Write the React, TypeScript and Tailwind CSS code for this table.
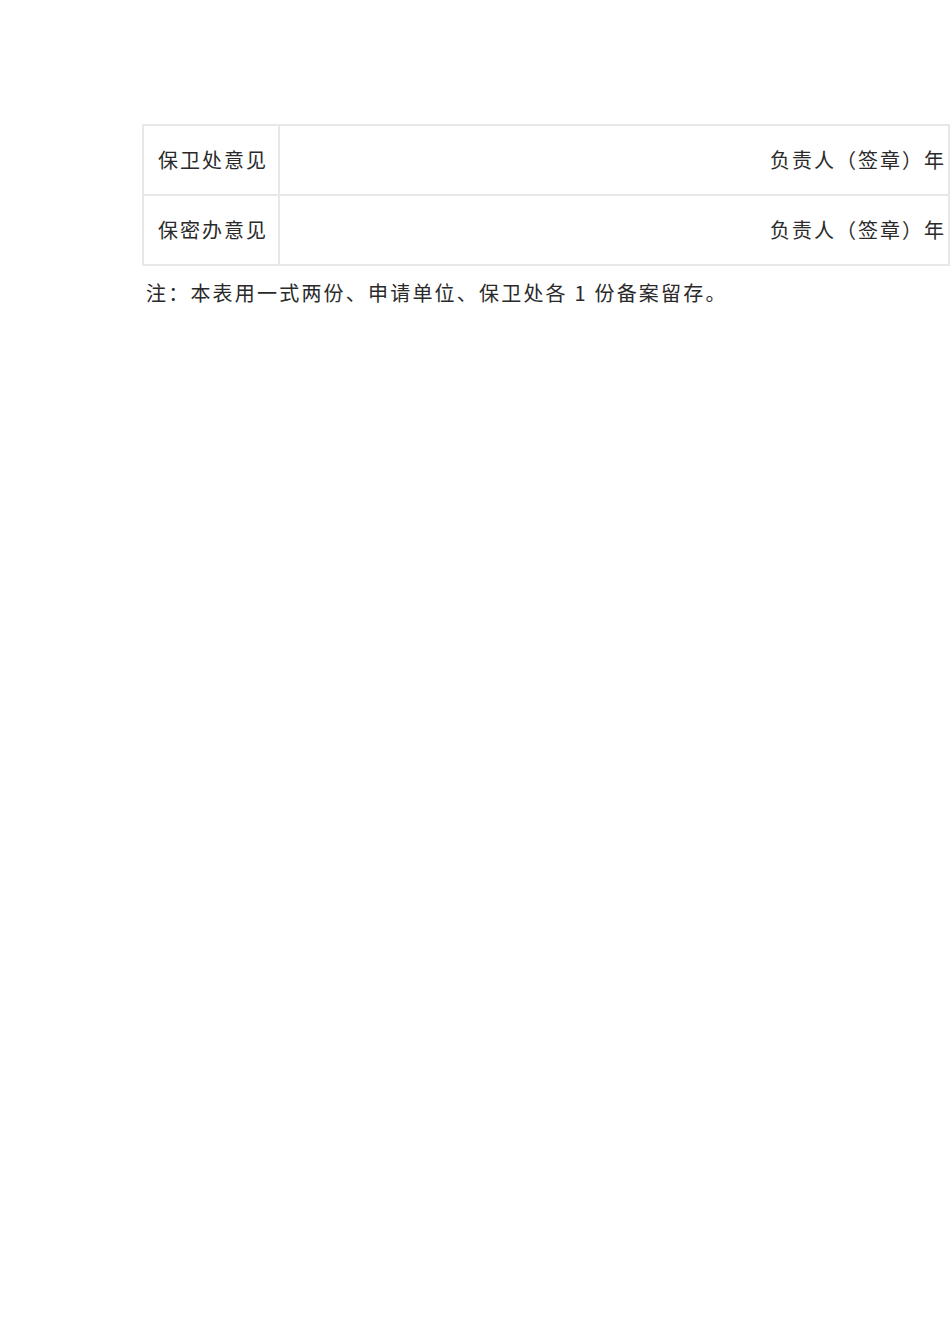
import React from "react";

const rows = ["保卫处意见", "保密办意见"];

export default function App() {
  return (
    <div
      className="w-[950px] h-[1344px] bg-white overflow-hidden text-[#2a2a2a]"
      style={{ fontFamily: '"Noto Sans CJK SC", "Noto Sans", sans-serif' }}
    >
      <div className="pt-[124px] pl-[142px]">
        <table className="w-[808px] border-collapse table-fixed">
          <tbody>
            {rows.map((label) => (
              <tr key={label} className="h-[70px]">
                <td className="w-[136px] border-2 border-[#e8e8e8] pl-[14px] text-[20px] tracking-[2px] leading-none whitespace-nowrap">
                  {label}
                </td>
                <td className="border-2 border-[#e8e8e8] pr-[2px] text-right text-[20px] tracking-[2px] leading-none whitespace-nowrap">
                  负责人（签章）年
                </td>
              </tr>
            ))}
          </tbody>
        </table>
        <p className="mt-[17px] pl-[4px] text-[20px] tracking-[2.2px] leading-none whitespace-nowrap">
          注：本表用一式两份、申请单位、保卫处各 1 份备案留存。
        </p>
      </div>
    </div>
  );
}
